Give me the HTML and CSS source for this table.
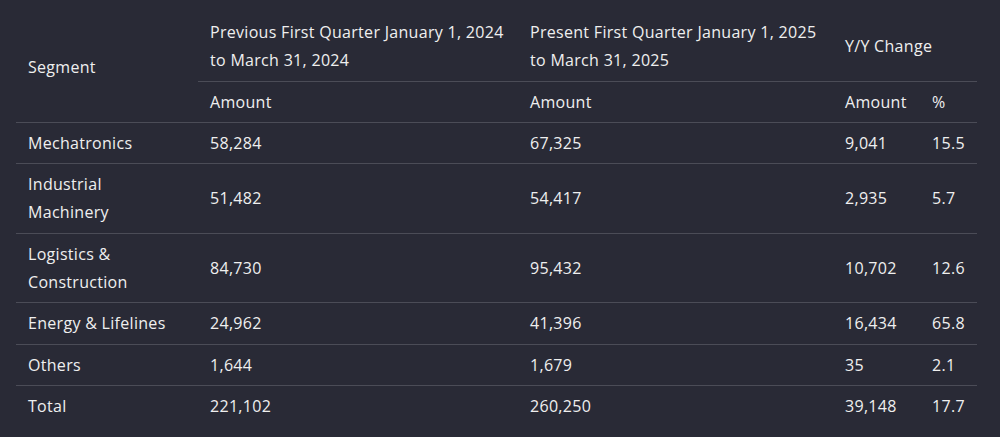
FILE: index.html
```html
<!DOCTYPE html>
<html lang="en">
<head>
<meta charset="utf-8">
<title>Segment results</title>
<link rel="stylesheet" href="styles.css">
</head>
<body>
<table class="seg-table">
  <colgroup>
    <col class="c-seg">
    <col class="c-prev">
    <col class="c-pres">
    <col class="c-amt">
    <col class="c-pct">
  </colgroup>
  <thead>
    <tr>
      <th rowspan="2" class="no-top">Segment</th>
      <th class="no-top">Previous First Quarter January 1, 2024 to March 31, 2024</th>
      <th class="no-top">Present First Quarter January 1, 2025 to March 31, 2025</th>
      <th colspan="2" class="no-top">Y/Y Change</th>
    </tr>
    <tr>
      <th>Amount</th>
      <th>Amount</th>
      <th>Amount</th>
      <th>%</th>
    </tr>
  </thead>
  <tbody>
    <tr><td>Mechatronics</td><td>58,284</td><td>67,325</td><td>9,041</td><td>15.5</td></tr>
    <tr><td>Industrial Machinery</td><td>51,482</td><td>54,417</td><td>2,935</td><td>5.7</td></tr>
    <tr><td>Logistics &amp; Construction</td><td>84,730</td><td>95,432</td><td>10,702</td><td>12.6</td></tr>
    <tr><td>Energy &amp; Lifelines</td><td>24,962</td><td>41,396</td><td>16,434</td><td>65.8</td></tr>
    <tr><td>Others</td><td>1,644</td><td>1,679</td><td>35</td><td>2.1</td></tr>
    <tr><td class="no-bottom">Total</td><td class="no-bottom">221,102</td><td class="no-bottom">260,250</td><td class="no-bottom">39,148</td><td class="no-bottom">17.7</td></tr>
  </tbody>
</table>
</body>
</html>
```
FILE: styles.css
```css
html, body {
  margin: 0;
  padding: 0;
  background: #292a36;
}
body {
  padding: 12px 16px 0 16px;
  font-family: "Open Sans", "Noto Sans", sans-serif;
  font-size: 16px;
  letter-spacing: 0.3px;
  color: #efefef;
}
.seg-table {
  border-collapse: collapse;
  table-layout: fixed;
  width: 961px;
}
.c-seg { width: 182px; }
.c-prev { width: 320px; }
.c-pres { width: 315px; }
.c-amt { width: 87px; }
.c-pct { width: 57px; }
.seg-table th,
.seg-table td {
  text-align: left;
  font-weight: 400;
  padding: 6px 12px;
  line-height: 28.3px;
  vertical-align: middle;
  border-top: 1px solid #4b4c57;
  border-bottom: 1px solid #4b4c57;
}
.seg-table th.no-top { border-top: none; }
.seg-table td.no-bottom { border-bottom: none; }
```
